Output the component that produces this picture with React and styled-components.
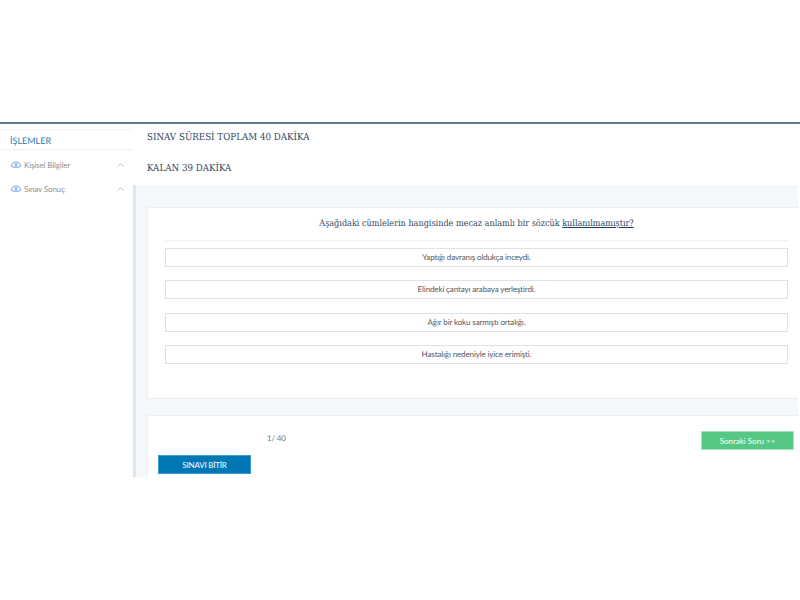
import styled, { createGlobalStyle } from 'styled-components'

const GlobalStyle = createGlobalStyle`
  html, body {
    margin: 0;
    padding: 0;
    background: #fff;
    overflow: hidden;
    text-rendering: geometricPrecision;
  }
  * {
    box-sizing: border-box;
  }
`

const Page = styled.div`
  width: 800px;
  height: 600px;
  padding-top: 122px;
  overflow: hidden;
  font-family: Lato, sans-serif;
`

const Shell = styled.div`
  display: flex;
  height: 355px;
  border-top: 2px solid #5f7a8c;
`

const Sidebar = styled.aside`
  flex: 0 0 133px;
  padding-top: 5px;
`

const SideTitle = styled.div`
  height: 21px;
  padding-left: 10px;
  border-top: 1px solid #f2f2f2;
  border-bottom: 1px solid #f0f0f0;
  color: #1a7db5;
  font-size: 9px;
  line-height: 22px;
`

const SideList = styled.div`
  display: flex;
  flex-direction: column;
  gap: 9px;
  padding: 7px 9px 0 11px;
`

const SideItem = styled.div`
  display: flex;
  align-items: center;
  height: 15px;
  color: #8b9298;
  font-size: 8px;
  letter-spacing: -0.12px;

  & > span {
    flex: 1;
    margin-left: 3px;
  }
`

const Main = styled.main`
  flex: 1;
  display: flex;
  flex-direction: column;
  min-width: 0;
`

const Header = styled.header`
  height: 61px;
  padding: 7px 0 0 14px;
  display: flex;
  flex-direction: column;
  gap: 17px;
`

const Heading = styled.h2`
  margin: 0;
  color: #34495e;
  font-family: 'DejaVu Serif', serif;
  font-size: 9.7px;
  font-stretch: condensed;
  font-weight: 400;
  line-height: 14px;
`

const Content = styled.div`
  flex: 1;
  display: flex;
  flex-direction: column;
  gap: 16px;
  margin-right: 2px;
  padding-top: 22px;
  background: #f5f8fb;
  border-left: 3px solid #e3e6e9;
`

const QuestionCard = styled.section`
  height: 192px;
  margin-left: 11px;
  padding: 0 10px 0 17px;
  background: #fff;
  border: 1px solid #eceef0;
  border-right: 0;
`

const Question = styled.div`
  height: 33px;
  padding-top: 9px;
  border-bottom: 1px solid #f0f1f2;
  color: #34495e;
  font-family: 'DejaVu Serif', serif;
  font-size: 9px;
  font-stretch: condensed;
  line-height: 14px;
  text-align: center;

  & u {
    color: #1d3f5e;
  }
`

const Options = styled.div`
  display: flex;
  flex-direction: column;
  gap: 13.33px;
  padding-top: 7px;
`

const Option = styled.div`
  height: 19px;
  border: 1px solid #dfe1e3;
  color: #55595d;
  font-size: 8px;
  letter-spacing: -0.12px;
  line-height: 17px;
  text-align: center;
`

const FooterCard = styled.section`
  flex: 1;
  position: relative;
  display: flex;
  margin-left: 11px;
  padding: 15px 4px 3px 10px;
  background: #fff;
  border-top: 1px solid #eceef0;
  border-left: 1px solid #eceef0;
`

const Counter = styled.div`
  position: absolute;
  left: 119px;
  top: 15px;
  color: #6f757b;
  font-size: 8px;
  letter-spacing: -0.2px;
  line-height: 14px;
`

const FinishButton = styled.button`
  align-self: flex-end;
  width: 93px;
  height: 19px;
  padding: 0;
  background: #0077b5;
  border: 1px solid #3d9ad0;
  color: #fff;
  font-family: Lato, sans-serif;
  font-size: 8px;
  letter-spacing: -0.2px;
`

const NextButton = styled.button`
  width: 93px;
  height: 19px;
  margin-left: auto;
  padding: 0;
  background: #57c785;
  border: 1px solid #a8e4c0;
  color: #fff;
  font-family: Lato, sans-serif;
  font-size: 8px;
`

const CloudIcon = () => (
  <svg width="10" height="8" viewBox="0 0 20 16" fill="none">
    <path d="M1 10a9 8 0 0 1 18 0c0 1-1 2-2 2H3c-1 0-2-1-2-2z" stroke="#6ea6e6" strokeWidth="2" />
    <path d="M10 5v9M7 8l3-3 3 3" stroke="#6ea6e6" strokeWidth="2" />
  </svg>
)

const ChevronIcon = () => (
  <svg width="7" height="4" viewBox="0 0 7 4" fill="none">
    <path d="M.5 3.5l3-3 3 3" stroke="#a9adb1" strokeWidth=".8" />
  </svg>
)

const options = [
  'Yaptığı davranış oldukça inceydi.',
  'Elindeki çantayı arabaya yerleştirdi.',
  'Ağır bir koku sarmıştı ortalığı.',
  'Hastalığı nedeniyle iyice erimişti.',
]

const App = () => (
  <>
    <GlobalStyle />
    <Page>
      <Shell>
        <Sidebar>
          <SideTitle>İŞLEMLER</SideTitle>
          <SideList>
            <SideItem>
              <CloudIcon />
              <span>Kişisel Bilgiler</span>
              <ChevronIcon />
            </SideItem>
            <SideItem>
              <CloudIcon />
              <span>Sınav Sonuç</span>
              <ChevronIcon />
            </SideItem>
          </SideList>
        </Sidebar>
        <Main>
          <Header>
            <Heading>SINAV SÜRESİ TOPLAM 40 DAKİKA</Heading>
            <Heading>KALAN 39 DAKİKA</Heading>
          </Header>
          <Content>
            <QuestionCard>
              <Question>
                Aşağıdaki cümlelerin hangisinde mecaz anlamlı bir sözcük <u>kullanılmamıştır?</u>
              </Question>
              <Options>
                {options.map((text) => (
                  <Option key={text}>{text}</Option>
                ))}
              </Options>
            </QuestionCard>
            <FooterCard>
              <Counter>1/ 40</Counter>
              <FinishButton>SINAVI BİTİR</FinishButton>
              <NextButton>Sonraki Soru &gt;&gt;</NextButton>
            </FooterCard>
          </Content>
        </Main>
      </Shell>
    </Page>
  </>
)

export default App
